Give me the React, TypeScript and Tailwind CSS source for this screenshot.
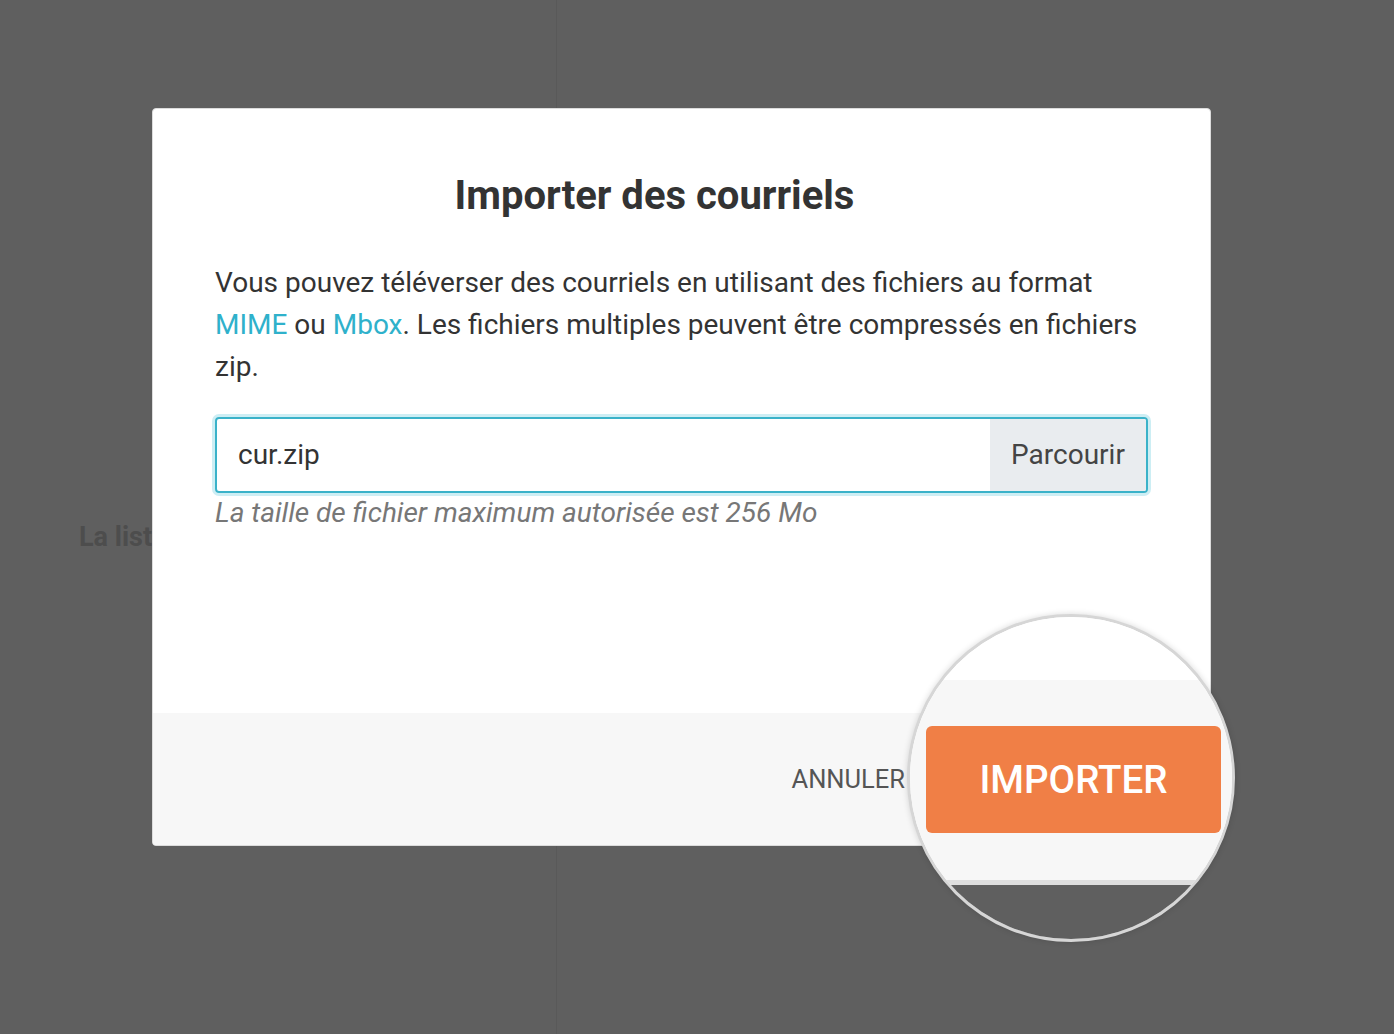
export default function App() {
  return (
    <div
      className="relative flex h-[1034px] w-[1394px] overflow-hidden bg-[#5f5f5f]"
      style={{ fontFamily: "Roboto, 'Noto Sans', Arial, sans-serif" }}
    >
      {/* page behind the overlay */}
      <div className="w-[557px] shrink-0 border-r border-[#595959] pl-[79px] pt-[517px]">
        <p className="text-[27px] font-bold text-[#4d4d4d]">La liste est vide</p>
      </div>
      <div className="flex-1" />

      {/* modal */}
      <div className="absolute left-[152px] top-[108px] flex h-[738px] w-[1059px] flex-col overflow-hidden rounded-[4px] border border-[#dcdcdc] bg-white">
        <div className="flex-1 px-[62px] pt-[63px]">
          <h2 className="pr-[54px] text-center text-[40px] font-bold leading-[48px] text-[#333]">
            Importer des courriels
          </h2>
          <p className="mt-[42px] text-[28px] leading-[42px] text-[#333]">
            Vous pouvez téléverser des courriels en utilisant des fichiers au format{" "}
            <a className="text-[#2fb1cb]">MIME</a> ou <a className="text-[#2fb1cb]">Mbox</a>. Les fichiers
            multiples peuvent être compressés en fichiers zip.
          </p>
          <div className="mt-[29px] flex h-[76px] overflow-hidden rounded-[4px] border-2 border-[#3ab2c9] shadow-[0_0_0_3px_#cdeef4]">
            <div className="flex flex-1 items-center pl-[21px] text-[28px] text-[#333]">cur.zip</div>
            <div className="flex w-[156px] items-center justify-center bg-[#e9ecef] text-[28px] text-[#444]">
              Parcourir
            </div>
          </div>
          <p className="mt-[3px] text-[28px] italic leading-[34px] text-[#777]">
            La taille de fichier maximum autorisée est 256 Mo
          </p>
        </div>
        <div className="flex h-[132px] items-center justify-end bg-[#f7f7f7] pr-[305px]">
          <span className="text-[25.5px] uppercase text-[#555]">Annuler</span>
        </div>
      </div>

      {/* magnifier */}
      <div className="absolute left-[907px] top-[614px] flex h-[328px] w-[328px] flex-col overflow-hidden rounded-full border-[3px] border-[#d6d6d6] bg-white shadow-[0_0_6px_rgba(0,0,0,0.15)]">
        <div className="h-[63px] shrink-0 bg-white" />
        <div className="h-[200px] shrink-0 bg-[#f7f7f7] pl-[16px] pt-[46px]">
          <div className="flex h-[107px] w-[295px] items-center justify-center rounded-[6px] bg-[#f07f46] text-[38.5px] font-medium text-white">
            IMPORTER
          </div>
        </div>
        <div className="h-[5px] shrink-0 bg-[#dedede]" />
        <div className="flex-1 bg-[#5f5f5f]" />
      </div>
    </div>
  );
}
